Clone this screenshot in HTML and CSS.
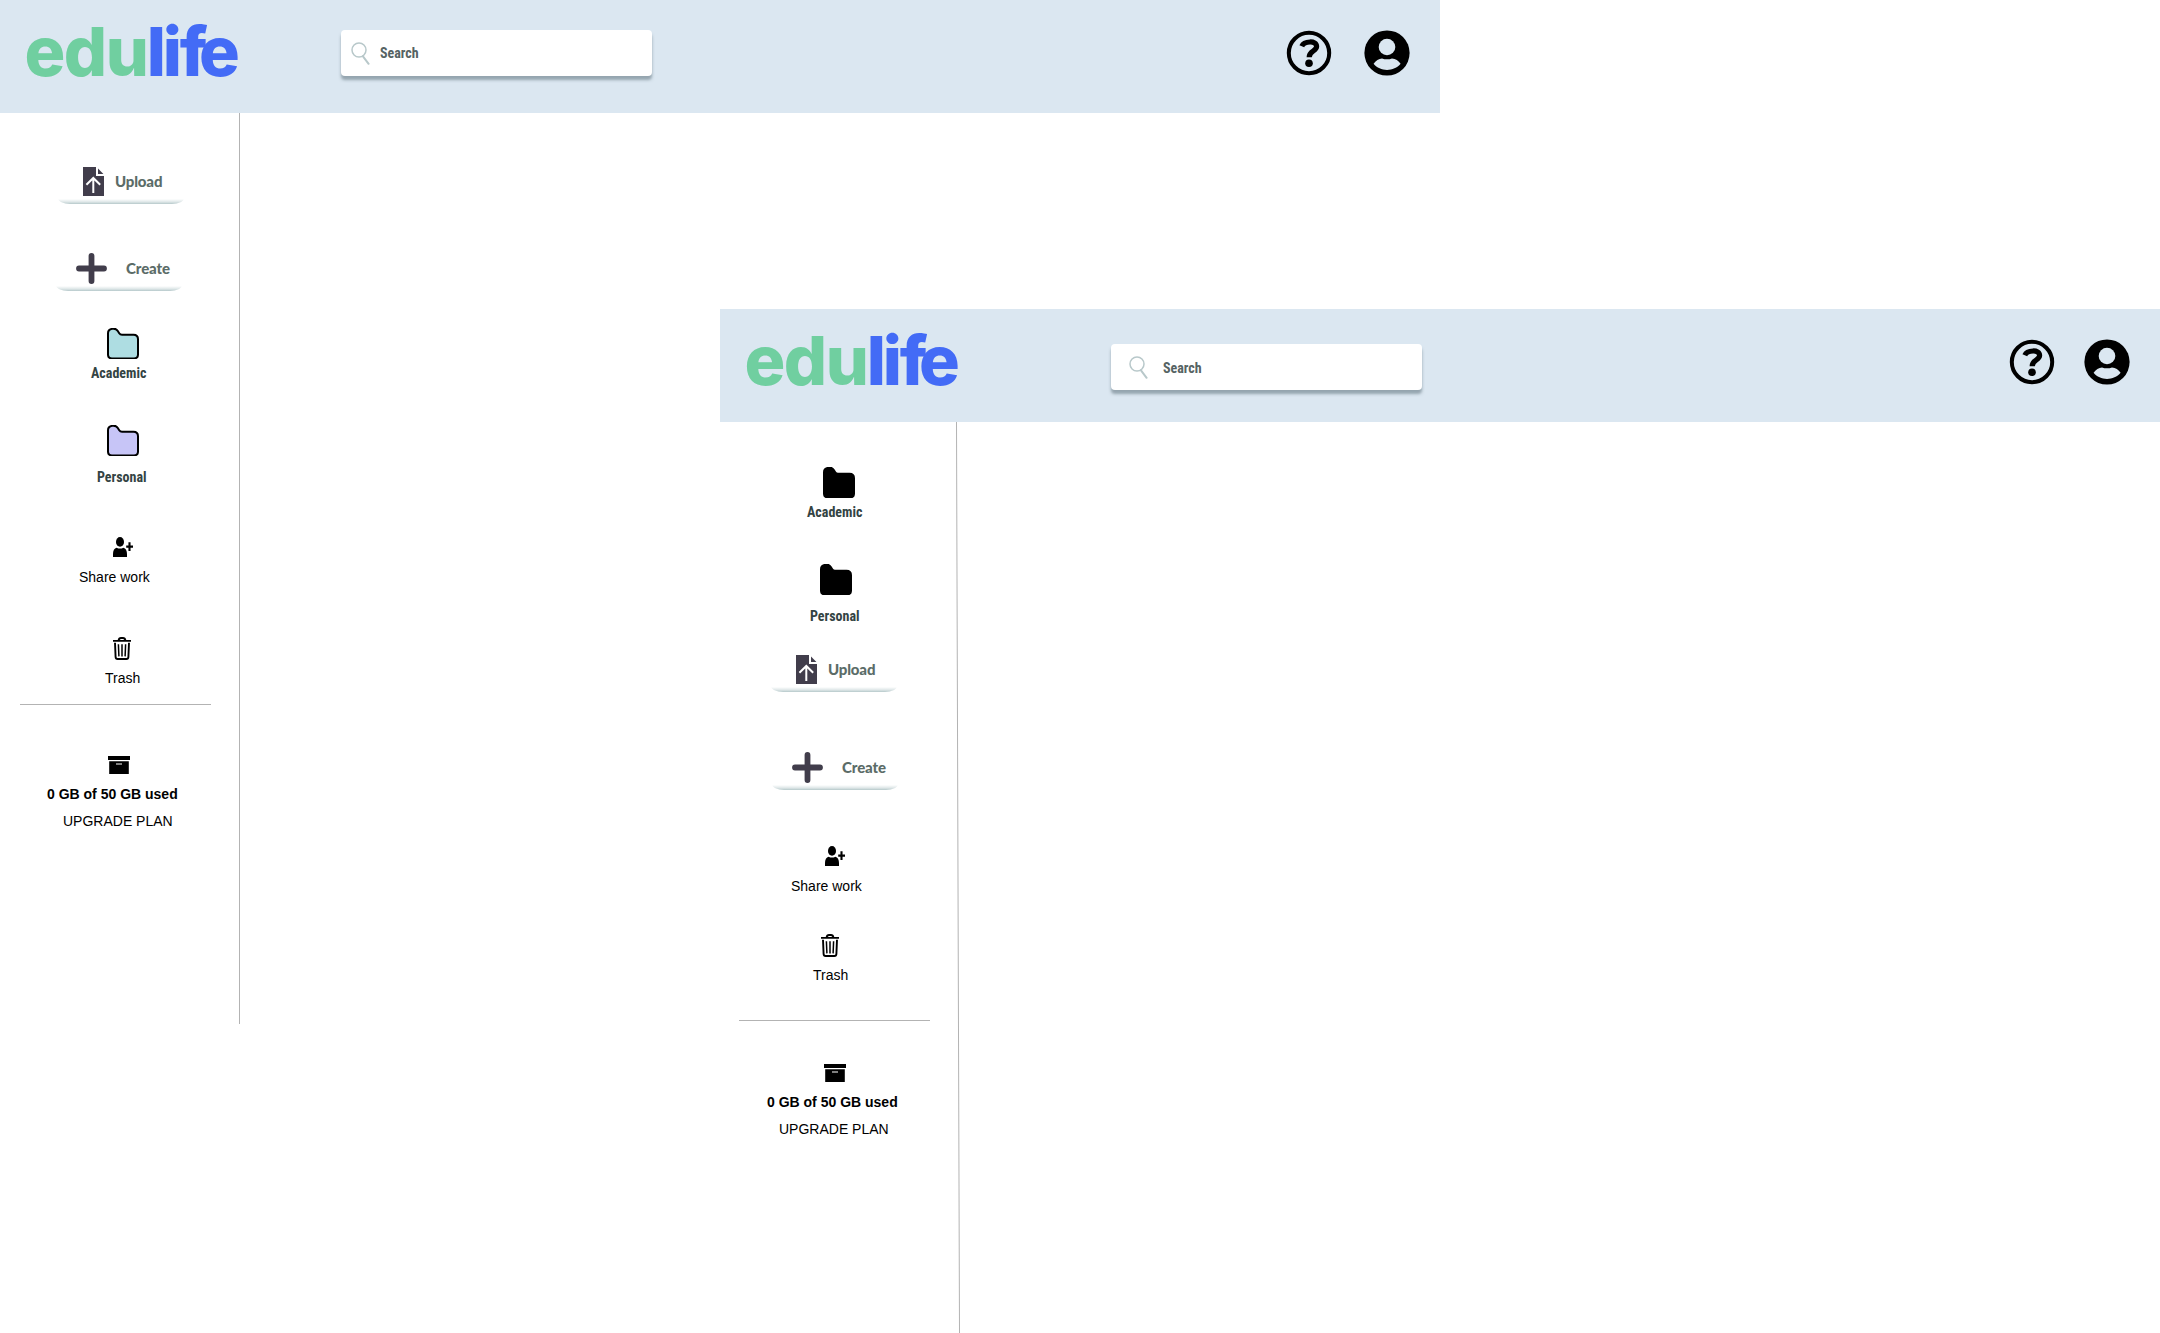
FILE: index.html
```html
<!DOCTYPE html>
<html lang="en">
<head>
<meta charset="utf-8">
<title>edulife</title>
<link rel="stylesheet" href="styles.css">
</head>
<body>
<svg class="defs" aria-hidden="true">
  <symbol id="search" viewBox="0 0 19 23"><ellipse cx="8" cy="8" rx="7" ry="7.1" fill="none" stroke="#b8c8ca" stroke-width="1.5"/><path d="M11.8 14.2 17.6 21.8" stroke="#b8c8ca" stroke-width="2" stroke-linecap="round"/></symbol>
  <symbol id="help" viewBox="0 0 46 46"><circle cx="23" cy="23" r="20.2" fill="none" stroke="#000" stroke-width="4"/><path d="M15.8 16.2C18 11.2 30.6 9.8 30.6 16.6 30.6 21.2 23.2 20.6 23.2 27.2" fill="none" stroke="#000" stroke-width="5.2"/><circle cx="23" cy="33.2" r="3.8"/></symbol>
  <symbol id="avatar" viewBox="0 0 46 46"><circle cx="23" cy="23" r="22.6"/><circle cx="23" cy="17" r="8.3" fill="#dbe7f1"/><path d="M9.6 33.8C11.6 30.4 15 28.6 18 28.4 21 29.6 25 29.6 28 28.4 31.5 28.6 34.6 30.4 36.6 33.8 30 42 16 42 9.6 33.8Z" fill="#dbe7f1"/></symbol>
  <symbol id="upload" viewBox="0 0 21 29"><path d="M0 0H13V9H21V29H0Z" fill="#413d4b"/><path d="M15 1.5V7H20.4Z" fill="#413d4b"/><path d="M10.3 26V11M3.4 17.8 10.3 11 17.2 17.8" fill="none" stroke="#fff" stroke-width="2"/></symbol>
  <symbol id="plus" viewBox="0 0 31 31"><path d="M15.5 3V28M3 15.5H28" stroke="#413d4b" stroke-width="5.8" stroke-linecap="round"/></symbol>
  <symbol id="folder" viewBox="0 0 32 31"><path d="M1 5.2C1 .3 8.4-.8 10.8 3L12.2 5.2Q13.2 6.7 15 6.7H26.5Q31 6.7 31 11.2V26.5Q31 30.4 27 30.4H5Q1 30.4 1 26.5Z" stroke="#000" stroke-width="2"/></symbol>
  <symbol id="share" viewBox="0 0 20 20"><ellipse cx="7" cy="4.9" rx="4" ry="4.9"/><path d="M0 20V17C0 13.5 1.3 11.4 3.6 10.7Q7 12.4 10.4 10.7C12.7 11.4 14 13.5 14 17V20Z"/><path d="M16.5 5.2V14M13.2 9.6H20" stroke="#000" stroke-width="2.1"/></symbol>
  <symbol id="trash" viewBox="0 0 18 23"><path d="M0 3.9H18M5.6 3.4Q6 1 8 1H10Q12 1 12.4 3.4M2 5.8 2.6 20Q2.7 22 4.6 22H13.4Q15.3 22 15.4 20L16 5.8" fill="none" stroke="#000" stroke-width="1.9"/><path d="M5.4 7.3 5.9 19.4M9 7.3V19.4M12.6 7.3 12.1 19.4" stroke="#000" stroke-width="1.5"/></symbol>
  <symbol id="archive" viewBox="0 0 22 18"><path d="M0 0H22V4H0Z"/><path fill-rule="evenodd" d="M1.2 5.2H20.8V18H1.2ZM8 7.5V8.6H14V7.5Z"/></symbol>
</svg>
<main class="canvas">
  <section class="frame frame-a">
    <header class="header">
      <svg class="logo" viewBox="0 0 240 100"><text class="logo-text" y="76"><tspan class="logo-edu" x="0.5 39.8 81.8">edu</tspan><tspan class="logo-life" x="122.8 138.8 155.8 175">life</tspan></text></svg>
      <div class="search"><svg class="i-search"><use href="#search"/></svg><span class="condensed search-text">Search</span></div>
      <nav class="actions"><svg class="i-head"><use href="#help"/></svg><svg class="i-head"><use href="#avatar"/></svg></nav>
    </header>
    <div class="body">
      <aside class="sidebar">
        <button class="button upload"><svg class="i-upload"><use href="#upload"/></svg><span>Upload</span></button>
        <button class="button create"><svg class="i-plus"><use href="#plus"/></svg><span>Create</span></button>
        <div class="item academic"><svg class="i-folder teal"><use href="#folder"/></svg><span class="condensed">Academic</span></div>
        <div class="item personal"><svg class="i-folder lilac"><use href="#folder"/></svg><span class="condensed">Personal</span></div>
        <div class="item share"><svg class="i-share"><use href="#share"/></svg><span>Share work</span></div>
        <div class="item trash"><svg class="i-trash"><use href="#trash"/></svg><span>Trash</span></div>
        <hr class="divider">
        <div class="item storage"><svg class="i-archive"><use href="#archive"/></svg><strong>0 GB of 50 GB used</strong><span class="plan">UPGRADE PLAN</span></div>
      </aside>
      <svg class="rule" viewBox="0 0 4 911"><path d="M1.5 0V911"/></svg>
    </div>
  </section>
  <section class="frame frame-b">
    <header class="header">
      <svg class="logo" viewBox="0 0 240 100"><text class="logo-text" y="76"><tspan class="logo-edu" x="0.5 39.8 81.8">edu</tspan><tspan class="logo-life" x="122.8 138.8 155.8 175">life</tspan></text></svg>
      <div class="search"><svg class="i-search"><use href="#search"/></svg><span class="condensed search-text">Search</span></div>
      <nav class="actions"><svg class="i-head"><use href="#help"/></svg><svg class="i-head"><use href="#avatar"/></svg></nav>
    </header>
    <div class="body">
      <aside class="sidebar">
        <div class="item academic"><svg class="i-folder"><use href="#folder"/></svg><span class="condensed">Academic</span></div>
        <div class="item personal"><svg class="i-folder"><use href="#folder"/></svg><span class="condensed">Personal</span></div>
        <button class="button upload"><svg class="i-upload"><use href="#upload"/></svg><span>Upload</span></button>
        <button class="button create"><svg class="i-plus"><use href="#plus"/></svg><span>Create</span></button>
        <div class="item share"><svg class="i-share"><use href="#share"/></svg><span>Share work</span></div>
        <div class="item trash"><svg class="i-trash"><use href="#trash"/></svg><span>Trash</span></div>
        <hr class="divider">
        <div class="item storage"><svg class="i-archive"><use href="#archive"/></svg><strong>0 GB of 50 GB used</strong><span class="plan">UPGRADE PLAN</span></div>
      </aside>
      <svg class="rule" viewBox="0 0 4 911"><path d="M.5 0 3.5 911"/></svg>
    </div>
  </section>
</main>
</body>
</html>
```
FILE: styles.css
```css
* { box-sizing: border-box; }
body { margin: 0; background: #fff; color: #000; font: 14px/16px "Liberation Sans", Arial, sans-serif; }
svg { display: block; flex: none; }
.defs { position: absolute; width: 0; height: 0; }
.canvas { position: relative; width: 2160px; height: 1333px; overflow: hidden; }
.frame { position: absolute; width: 1440px; height: 1024px; }
.frame-a { left: 0; top: 0; }
.frame-b { left: 720px; top: 309px; }

.header { display: flex; align-items: flex-start; height: 113px; padding: 0 30px 0 24px; background: #dbe7f1; }
.logo { width: 240px; height: 100px; }
.logo-text { font: 800 68px Inter, sans-serif; }
.logo-edu { fill: #70cfa0; }
.logo-life { fill: #436bf6; }
.search { display: flex; align-items: flex-start; width: 311px; height: 46px; margin: 30px 0 0 77px; padding: 12px 0 0 10px; background: #fff; border-radius: 4px; box-shadow: 0 4px 3px rgba(80, 100, 110, .5); }
.i-search { width: 19px; height: 23px; }
.search-text { margin: 3px 0 0 10px; }
.actions { display: flex; gap: 32px; margin: 30px 0 0 auto; }
.i-head { width: 46px; height: 46px; }
.frame-b .search { margin: 35px 0 0 127px; padding-left: 18px; }
.frame-b .search-text { margin: 4px 0 0 15px; }
.frame-b .actions { gap: 29px; }

.body { display: flex; height: 911px; }
.sidebar { display: flex; flex-direction: column; align-items: flex-start; width: 238px; }
.frame-b .sidebar { width: 236px; }
.rule { width: 4px; height: 911px; fill: none; stroke: #b3b3b3; }

.item { display: flex; flex-direction: column; align-items: flex-start; white-space: nowrap; }
.condensed { font-family: Roboto, sans-serif; font-weight: 700; font-stretch: 75%; color: #334343; }
.search .condensed { color: #566363; }
.button { display: flex; align-items: flex-start; width: 126px; height: 44px; padding: 0; border: 0; border-radius: 12px / 6px; background: linear-gradient(to top, #b5c8ca, #dde6e7 2px, #fff 5px); color: #5b6c68; font: 900 15px/18px Lato, sans-serif; }

.i-upload { width: 21px; height: 29px; margin: 7px 11px 0 25px; }
.upload span { margin-top: 12px; letter-spacing: -.15px; }
.i-plus { width: 31px; height: 31px; margin: 6px 19px 0 20px; }
.create span { margin-top: 12px; letter-spacing: -.1px; }
.i-folder { width: 32px; height: 31px; fill: #000; }
.teal { fill: #aedde2; }
.lilac { fill: #c7c5f7; }
.i-share { width: 20px; height: 20px; }
.i-trash { width: 18px; height: 23px; }
.i-archive { width: 22px; height: 18px; }

.upload { margin: 47px 0 0 58px; }
.create { margin: 43px 0 0 56px; }
.academic { margin: 37px 0 0 91px; gap: 6px; }
.academic .i-folder { margin-left: 16px; }
.personal { margin: 44px 0 0 97px; gap: 13px; }
.personal .i-folder { margin-left: 10px; }
.share { margin: 52px 0 0 79px; gap: 12px; }
.share .i-share { margin-left: 34px; }
.trash { margin: 52px 0 0 105px; gap: 10px; }
.trash .i-trash { margin-left: 8px; }
.divider { width: 191px; height: 1px; margin: 18px 0 0 20px; border: 0; background: #b3b3b3; }
.storage { margin: 51px 0 0 47px; }
.storage .i-archive { margin-left: 61px; }
.storage strong { margin-top: 12px; }
.plan { margin: 11px 0 0 16px; }

.frame-b .academic { margin: 45px 0 0 87px; }
.frame-b .personal { margin-left: 90px; }
.frame-b .upload { margin: 24px 0 0 51px; }
.frame-b .create { margin: 54px 0 0 52px; }
.frame-b .share { margin: 56px 0 0 71px; }
.frame-b .trash { margin: 40px 0 0 93px; }
.frame-b .divider { margin: 37px 0 0 19px; }
.frame-b .storage { margin-top: 43px; }
.frame-b .storage .i-archive { margin-left: 57px; }
.frame-b .plan { margin-left: 12px; }
```
